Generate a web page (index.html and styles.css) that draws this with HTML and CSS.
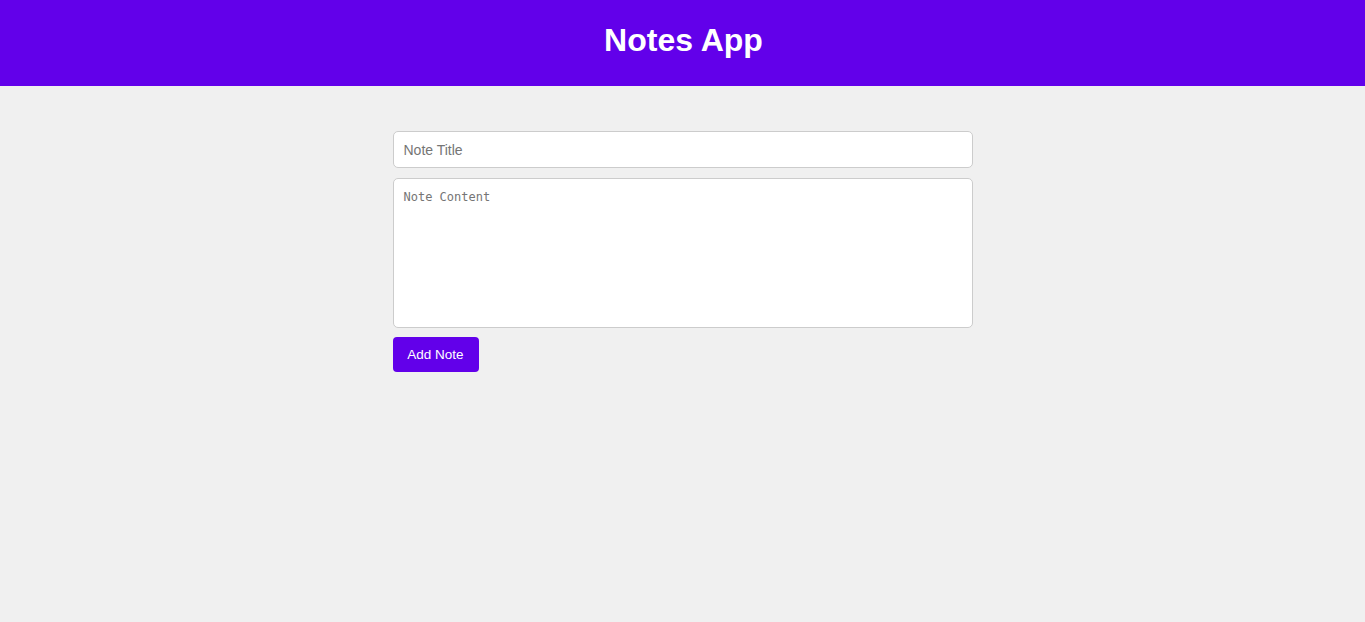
FILE: index.html
```html
<!DOCTYPE html>
<html>
<head>
<meta charset="utf-8">
<title>Notes App</title>
<link rel="stylesheet" href="styles.css">
</head>
<body>
<header class="app-header">
  <h1 class="app-title">Notes App</h1>
</header>
<main class="container">
  <input class="note-title" type="text" placeholder="Note Title">
  <textarea class="note-content" placeholder="Note Content"></textarea>
  <button class="add-btn">Add Note</button>
</main>
</body>
</html>
```
FILE: styles.css
```css
html, body {
  margin: 0;
  padding: 0;
}
body {
  background: #f0f0f0;
  font-family: "Liberation Sans", Arial, sans-serif;
  min-height: 622px;
}
.app-header {
  background: #6200ea;
  color: #fff;
  height: 86px;
  display: flex;
  align-items: center;
  justify-content: center;
}
.app-title {
  margin: 0;
  font-size: 32px;
  font-weight: bold;
  line-height: 37px;
  position: relative;
  top: -3px;
  left: 1px;
}
.container {
  width: 580px;
  margin: 0 auto;
  padding-top: 45px;
  display: flex;
  flex-direction: column;
  align-items: flex-start;
}
.note-title {
  box-sizing: border-box;
  width: 100%;
  height: 37px;
  padding: 0 10px;
  border: 1px solid #ccc;
  border-radius: 5px;
  font-family: "Liberation Sans", Arial, sans-serif;
  font-size: 14px;
  background: #fff;
  margin: 0 0 10px 0;
  outline: none;
}
.note-title::placeholder {
  color: #757575;
}
.note-content {
  box-sizing: border-box;
  width: 100%;
  height: 150px;
  padding: 11px 10px;
  border: 1px solid #ccc;
  border-radius: 5px;
  font-family: "DejaVu Sans Mono", "Liberation Mono", monospace;
  font-size: 12px;
  background: #fff;
  margin: 0 0 9px 0;
  resize: none;
  outline: none;
  display: block;
}
.note-content::placeholder {
  color: #757575;
}
.add-btn {
  box-sizing: border-box;
  height: 35px;
  width: 86px;
  padding: 0;
  white-space: nowrap;
  background: #6200ea;
  color: #fff;
  border: none;
  border-radius: 4px;
  font-family: "Liberation Sans", Arial, sans-serif;
  font-size: 13.5px;
  cursor: pointer;
}
```
